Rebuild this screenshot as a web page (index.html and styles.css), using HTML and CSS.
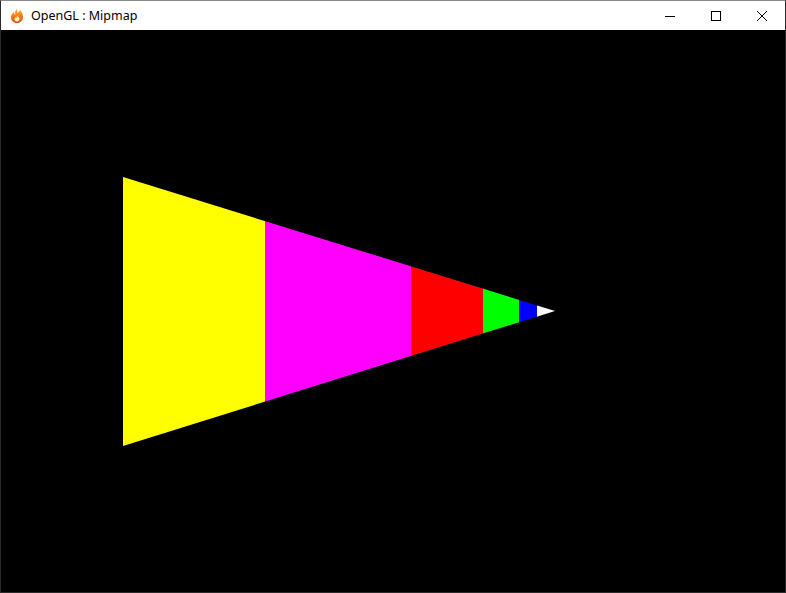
FILE: index.html
```html
<!DOCTYPE html>
<html>
<head>
<meta charset="utf-8">
<link rel="stylesheet" href="styles.css">
</head>
<body>
<div class="window">
  <div class="titlebar">
    <div class="title">
      <svg class="app-icon" width="16" height="16" viewBox="0 0 16 16">
        <defs>
          <linearGradient id="fl" x1="0" y1="0" x2="0" y2="1">
            <stop offset="0" stop-color="#ffb020"/>
            <stop offset="1" stop-color="#e84a10"/>
          </linearGradient>
        </defs>
        <path d="M8 1 C9 3 7 4 9 5 C10 3 11 3 11 2 C13 4 14 6 14 9 C14 12.5 11.5 15 8 15 C4.5 15 2 12.5 2 9.5 C2 7 3.5 5 5 4 C5 6 6 7 6.5 7 C5.5 5 6 2.5 8 1 Z" fill="url(#fl)"/>
        <path d="M8 8 C9.5 8.5 10.5 9.5 10.5 11 C10.5 12.5 9.3 13.5 8 13.5 C6.7 13.5 5.5 12.5 5.5 11.2 C5.5 10 6.5 9.5 7 9 C7.2 10 7.6 10.3 8 10.2 C7.5 9.5 7.6 8.6 8 8 Z" fill="#fff3c0"/>
      </svg>
      <span class="title-text">OpenGL : Mipmap</span>
    </div>
    <div class="controls">
      <div class="ctl">
        <svg width="10" height="10" viewBox="0 0 10 10"><path d="M0 5.5 H10" stroke="#000" stroke-width="1"/></svg>
      </div>
      <div class="ctl">
        <svg width="10" height="10" viewBox="0 0 10 10"><rect x="0.5" y="0.5" width="9" height="9" fill="none" stroke="#000" stroke-width="1"/></svg>
      </div>
      <div class="ctl">
        <svg width="10" height="10" viewBox="0 0 10 10"><path d="M0 0 L10 10 M10 0 L0 10" stroke="#000" stroke-width="1"/></svg>
      </div>
    </div>
  </div>
  <div class="canvas">
    <svg class="scene" width="784" height="562" viewBox="0 0 784 562" shape-rendering="crispEdges">
      <defs>
        <clipPath id="tri">
          <polygon points="122,147 122,416 554,281"/>
        </clipPath>
      </defs>
      <g clip-path="url(#tri)">
        <rect x="122" y="140" width="142" height="290" fill="#ffff00"/>
        <rect x="264" y="140" width="146" height="290" fill="#ff00ff"/>
        <rect x="410" y="140" width="72" height="290" fill="#ff0000"/>
        <rect x="482" y="140" width="36" height="290" fill="#00ff00"/>
        <rect x="518" y="140" width="18" height="290" fill="#0000ff"/>
        <rect x="536" y="140" width="20" height="290" fill="#ffffff"/>
      </g>
    </svg>
  </div>
</div>
</body>
</html>
```
FILE: styles.css
```css
html, body {
  margin: 0;
  padding: 0;
  background: #000;
}
.window {
  width: 786px;
  height: 593px;
  box-sizing: border-box;
  border: 1px solid #2a2a2a;
  border-top-color: #888;
  display: flex;
  flex-direction: column;
  background: #000;
  overflow: hidden;
}
.titlebar {
  height: 29px;
  background: #fff;
  display: flex;
  justify-content: space-between;
  align-items: stretch;
  flex: none;
}
.title {
  display: flex;
  align-items: center;
  padding-left: 8px;
  gap: 6px;
}
.app-icon {
  display: block;
}
.title-text {
  font-family: "Noto Sans", "Open Sans", sans-serif;
  font-size: 12.5px;
  color: #000;
}
.controls {
  display: flex;
}
.ctl {
  width: 46px;
  display: flex;
  align-items: center;
  justify-content: center;
}
.ctl svg {
  display: block;
}
.canvas {
  flex: 1;
  background: #000;
}
.scene {
  display: block;
}
```
